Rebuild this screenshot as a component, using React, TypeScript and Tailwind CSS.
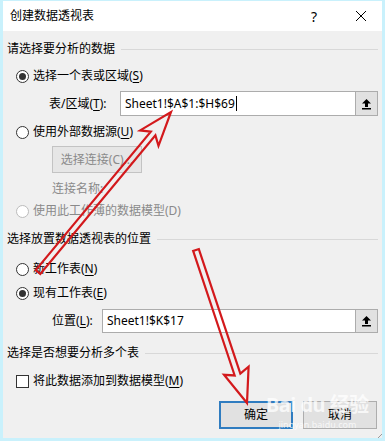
import React from 'react';

const FONT = { fontFamily: '"Noto Sans", "Noto Sans CJK SC", sans-serif' };

function Radio({ checked, disabled }: { checked?: boolean; disabled?: boolean }) {
  return (
    <span
      className={`w-[13px] h-[13px] rounded-full border flex items-center justify-center bg-white shrink-0 ${
        disabled ? 'border-[#bcbcbc]' : 'border-[#333333]'
      }`}
    >
      {checked && <span className="w-[7px] h-[7px] rounded-full bg-[#333333]" />}
    </span>
  );
}

function Header({ text }: { text: string }) {
  return (
    <div className="h-[18px] flex items-center text-[12px] text-black">
      <span>{text}</span>
      <div className="flex-1 h-px bg-[#d8d8d8] ml-[6px]" />
    </div>
  );
}

function RefButton() {
  return (
    <div className="w-[22px] h-full bg-[#e1e1e1] border border-[#acacac] border-l-0 flex items-center justify-center">
      <svg width="11" height="12" viewBox="0 0 11 12">
        <path d="M5.5 1 L10 5.5 L7 5.5 L7 9 L4 9 L4 5.5 L1 5.5 Z" fill="#000" />
        <rect x="1" y="10" width="9" height="1.5" fill="#000" />
      </svg>
    </div>
  );
}

function U({ c }: { c: string }) {
  return <span className="underline underline-offset-2">{c}</span>;
}

export default function App() {
  return (
    <div
      className="w-[385px] h-[441px] relative overflow-hidden bg-[#f0f0f0] border-x-[3px] border-b-[3px] border-t border-[#c9f1fc] flex flex-col"
      style={FONT}
    >
      {/* Title bar */}
      <div className="h-[30px] bg-white flex items-center pl-[7px] pr-[15px] text-[12px] text-black shrink-0">
        <span>创建数据透视表</span>
        <span className="ml-auto text-[14px]">?</span>
        <svg className="ml-[38px]" width="12" height="12" viewBox="0 0 12 12">
          <path d="M1 1 L11 11 M11 1 L1 11" stroke="#000" strokeWidth="1" />
        </svg>
      </div>

      <div className="flex flex-col px-[4px] text-[12px] text-black">
        <div className="mt-[9px]">
          <Header text="请选择要分析的数据" />
        </div>

        <div className="mt-[9px] h-[18px] flex items-center gap-[4px] pl-[9px]">
          <Radio checked />
          <span>
            选择一个表或区域(<U c="S" />)
          </span>
        </div>

        <div className="mt-[6px] h-[25px] flex items-center pl-[42px]">
          <span className="w-[71px]">
            表/区域(<U c="T" />):
          </span>
          <div className="flex-1 h-full bg-white border border-[#acacac] flex items-center pl-[4px]">
            <span>Sheet1!$A$1:$H$69</span>
            <span className="w-px h-[15px] bg-black ml-px" />
          </div>
          <RefButton />
        </div>

        <div className="mt-[7px] h-[18px] flex items-center gap-[4px] pl-[9px]">
          <Radio />
          <span>
            使用外部数据源(<U c="U" />)
          </span>
        </div>

        <div className="mt-[5px] pl-[45px]">
          <div className="w-[90px] h-[27px] bg-[#e6e6e6] border border-[#c3c3c3] flex items-center justify-center text-[#8a8a8a]">
            选择连接(C)...
          </div>
        </div>

        <div className="mt-[7px] h-[18px] flex items-center pl-[45px] text-[#8a8a8a]">连接名称:</div>

        <div className="mt-[4px] h-[18px] flex items-center gap-[4px] pl-[9px] text-[#8a8a8a]">
          <Radio disabled />
          <span>使用此工作薄的数据模型(D)</span>
        </div>

        <div className="mt-[10px]">
          <Header text="选择放置数据透视表的位置" />
        </div>

        <div className="mt-[12px] h-[18px] flex items-center gap-[4px] pl-[9px]">
          <Radio />
          <span>
            新工作表(<U c="N" />)
          </span>
        </div>

        <div className="mt-[6px] h-[18px] flex items-center gap-[4px] pl-[9px]">
          <Radio checked />
          <span>
            现有工作表(<U c="E" />)
          </span>
        </div>

        <div className="mt-[7px] h-[24px] flex items-center pl-[45px]">
          <span className="w-[50px]">
            位置(<U c="L" />):
          </span>
          <div className="flex-1 h-full bg-white border border-[#acacac] flex items-center pl-[4px]">
            Sheet1!$K$17
          </div>
          <RefButton />
        </div>

        <div className="mt-[11px]">
          <Header text="选择是否想要分析多个表" />
        </div>

        <div className="mt-[10px] h-[18px] flex items-center gap-[4px] pl-[9px]">
          <span className="w-[13px] h-[13px] border border-[#333333] bg-white shrink-0" />
          <span>
            将此数据添加到数据模型(<U c="M" />)
          </span>
        </div>

        <div className="mt-[11px] flex justify-end gap-[10px] pr-px">
          <div className="w-[74px] h-[28px] bg-[#e1e1e1] border-2 border-[#2f7cc0] flex items-center justify-center">
            确定
          </div>
          <div className="w-[74px] h-[28px] bg-[#e1e1e1] border border-[#adadad] flex items-center justify-center">
            取消
          </div>
        </div>
      </div>

      {/* Baidu watermark */}
      <div className="absolute left-[263px] top-[394px] flex flex-col items-center text-white/75 pointer-events-none">
        <span className="text-[20px] font-bold leading-none tracking-tight">Bai du 经验</span>
        <span className="text-[9px] leading-none mt-[5px]">jingyan.baidu.com</span>
      </div>

      {/* Red annotation arrows */}
      <svg className="absolute left-[-3px] top-[-1px] pointer-events-none" width="385" height="441" viewBox="0 0 385 441">
        <polygon
          points="35.7,270.1 150.8,131.6 140.1,130.4 171,112 158.5,145.8 155.4,135.4 40.3,273.9"
          fill="none"
          stroke="#d3191c"
          strokeWidth="2.2"
          strokeLinejoin="miter"
        />
        <polygon
          points="193.15,250.95 234.65,375.45 224,374.8 247,403 248.6,366.6 240.35,373.55 198.85,249.05"
          fill="none"
          stroke="#d3191c"
          strokeWidth="2.2"
        />
        <path d="M376 440 L384 432 M380 440 L384 436" stroke="#9a9a9a" strokeWidth="1" />
      </svg>
    </div>
  );
}
